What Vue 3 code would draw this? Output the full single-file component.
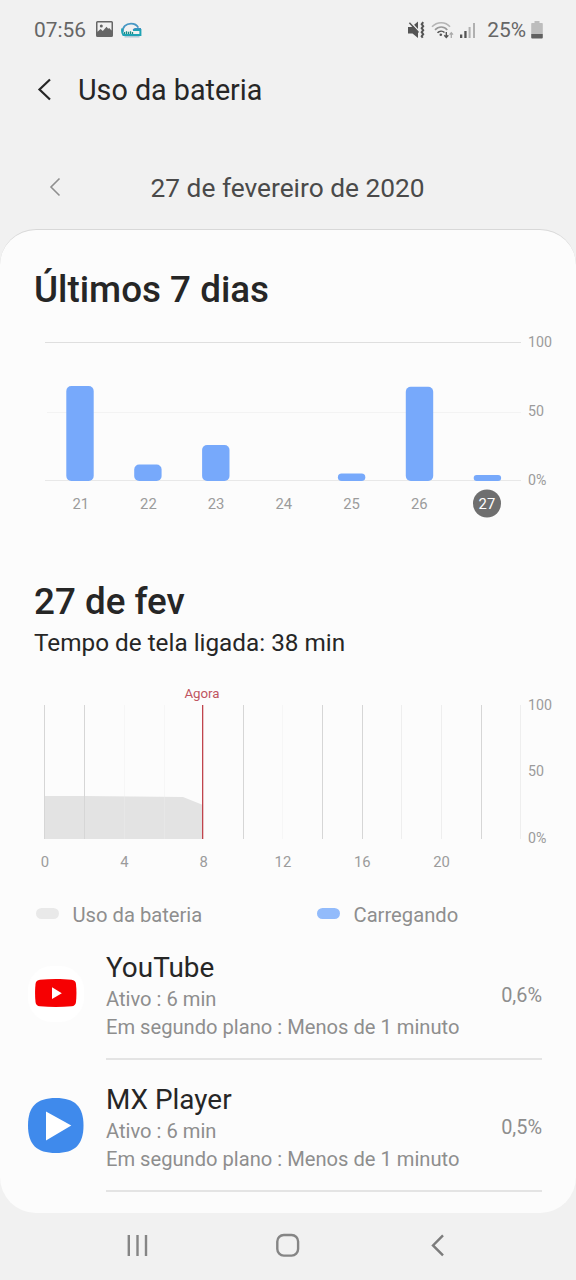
<!-- App.vue -->
<template>
  <div class="screen">
    <!-- STATUS BAR -->
    <div class="status-bar">
      <span class="clock">07:56</span>
      <svg class="icon-image" viewBox="0 0 17 16" width="17" height="16">
        <path
          fill="#666"
          fill-rule="evenodd"
          d="M1.5 0h14A1.500 1.500 0 0 1 17 1.500v13a1.500 1.500 0 0 1-1.500 1.500h-14A1.500 1.500 0 0 1 0 14.500v-13A1.500 1.500 0 0 1 1.500 0zM1.500 1.500v9.300L4.600 8l2.200 2 3.700-4.300 1.700 2.100 1-.8 2.300 2.600V1.500z"
        />
        <circle cx="5.300" cy="5" r="1.500" fill="#666" />
      </svg>
      <svg class="icon-app" viewBox="0 0 21 16" width="21" height="16">
        <path d="M2 10C1.200 5 5 1.600 10 1.600c3.500 0 6 1.500 7.300 4" fill="none" stroke="#4797c4" stroke-width="1.800" />
        <path d="M1.300 6.500C.8 9 1.100 11.300 2.300 12.900H19.400V8H12" fill="none" stroke="#1fa3b4" stroke-width="2" />
        <path d="M12 7.800L14 6.700h6" fill="none" stroke="#3f8fc4" stroke-width="1.300" />
        <path d="M3.500 12V10M5.500 12V9.300M7.500 12V9.800M9.500 12V9.300M11.500 12V10" stroke="#178c86" stroke-width="1.300" />
        <path d="M3.500 14.800h15" stroke="#a9c3d2" stroke-width="1.300" />
      </svg>

      <div class="status-right">
        <svg viewBox="0 0 17 18" width="17" height="18">
          <path d="M0 6h3.500L10 .5V17L4.500 12.500H0z" fill="#555" />
          <path d="M1.600 0L11.500 10.800" stroke="#f1f1f1" stroke-width="1.500" />
          <path d="M1.400 1.800L10.500 11.600" stroke="#555" stroke-width="1.500" />
          <path
            d="M15.200 1.200l-1.500 2 1.500 2-1.500 2 1.500 2-1.500 2 1.500 2-1.500 2 1 1.500"
            fill="none"
            stroke="#555"
            stroke-width="2"
          />
        </svg>
        <svg class="icon-wifi" viewBox="0 0 23 18" width="23" height="18">
          <g fill="none" stroke-width="1.600">
            <path d="M1 5.800C6 .3 14.500.3 19 5.800" stroke="#b4b4b4" />
            <path d="M4 8.900C7.500 5 13 5 16.300 8.900" stroke="#999" />
            <path d="M6.500 11.800c2-2 5-2.200 7-.3" stroke="#555" />
          </g>
          <circle cx="9.800" cy="13.800" r="1.300" fill="#555" />
          <path d="M15.300 11v5M13.300 14.200l2 2.300 2-2.300" fill="none" stroke="#555" stroke-width="1.400" />
          <path d="M20.300 17v-5M18.600 13.700l1.700-2 1.700 2" fill="none" stroke="#aaa" stroke-width="1.300" />
        </svg>
        <svg class="icon-signal" viewBox="0 0 16 17" width="16" height="17">
          <rect x="0" y="12.500" width="2.300" height="3.500" fill="#555" />
          <rect x="4.300" y="9" width="2.300" height="7" fill="#555" />
          <rect x="8.600" y="5" width="2" height="11" fill="#b0b0b0" />
          <rect x="13" y="1" width="2" height="15" fill="#b0b0b0" />
        </svg>
        <span class="battery-level">25%</span>
        <svg class="icon-battery" viewBox="0 0 12 18" width="12" height="18">
          <path d="M3.500 0h5v2H11a.8.8 0 0 1 .8.8V13H.2V2.800A.8.8 0 0 1 1 2h2.500z" fill="#bdbdbd" />
          <path d="M.2 13h11.600v3.500a.9.900 0 0 1-.9.900H1.100a.9.900 0 0 1-.9-.9z" fill="#606060" />
        </svg>
      </div>
    </div>

    <!-- HEADER -->
    <header class="header">
      <svg viewBox="0 0 16 24" width="16" height="24">
        <path d="M13 1.500L2.500 11.500 13 21.500" fill="none" stroke="#262626" stroke-width="2.200" />
      </svg>
      <h1>Uso da bateria</h1>
    </header>

    <div class="date-nav">
      <svg viewBox="0 0 12 20" width="12" height="20">
        <path d="M10.500 1.500L2 10l8.500 8.500" fill="none" stroke="#8f8f8f" stroke-width="1.600" />
      </svg>
      <span class="date">27 de fevereiro de 2020</span>
    </div>

    <main class="card">
      <!-- Section: last 7 days -->
      <h2>Últimos 7 dias</h2>
      <svg class="week-chart" viewBox="0 0 576 200" width="576" height="200">
        <rect x="45" y="17" width="476" height="1" fill="#dfdfdf" />
        <rect x="47" y="87" width="474" height="1" fill="#f3f3f3" />
        <rect x="45" y="155" width="476" height="1" fill="#e8e8e8" />
        <text v-for="l in weekScale" :key="l.text" x="528" :y="l.y" class="scale">{{ l.text }}</text>
        <g v-for="(d, i) in days" :key="d.day">
          <rect
            v-if="d.height"
            :x="66.300 + i * 67.900"
            :y="156 - d.height"
            width="27.400"
            :height="d.height"
            :rx="Math.min(5, d.height / 2)"
            fill="#77a9fb"
          />
          <circle v-if="d.selected" :cx="80.200 + i * 67.800" cy="178.500" r="14" fill="#6f6f6f" />
          <text :x="80.700 + i * 67.700" y="184.300" :class="['tick', { selected: d.selected }]">{{ d.day }}</text>
        </g>
      </svg>

      <!-- Section: selected day -->
      <h2 class="day-title">27 de fev</h2>
      <p class="screen-time">Tempo de tela ligada: 38 min</p>
      <svg class="day-chart" viewBox="0 0 576 210" width="576" height="210">
        <path d="M44 121H85L183 122 203 130V164H44z" fill="#e3e3e3" />
        <rect
          v-for="g in gridLines"
          :key="g.x"
          :x="g.x"
          y="30"
          width="1"
          height="134"
          :fill="g.strong ? '#d6d6d6' : '#eeeeee'"
          :fill-opacity="g.faded ? 0.4 : 1"
        />
        <rect x="202" y="30" width="1.300" height="134" fill="#c0444c" />
        <text x="202" y="23.300" class="now">Agora</text>
        <text v-for="l in dayScale" :key="l.text" x="528" :y="l.y" class="scale">{{ l.text }}</text>
        <text v-for="(h, i) in hours" :key="h" :x="45 + i * 79.300" y="192.300" class="tick">{{ h }}</text>
      </svg>

      <div class="legend">
        <div class="legend-item">
          <span class="swatch usage"></span>
          <span>Uso da bateria</span>
        </div>
        <div class="legend-item">
          <span class="swatch charging"></span>
          <span>Carregando</span>
        </div>
      </div>

      <!-- Section: apps -->
      <div v-for="app in apps" :key="app.name" class="app-row">
        <svg v-if="app.icon === 'youtube'" class="app-icon" viewBox="0 0 56 56" width="56" height="56">
          <rect width="56" height="56" rx="24" fill="#fff" />
          <path
            d="M12 13.700C22 12.700 34 12.700 43.500 13.700c2.700.3 4.200 1.600 4.500 4.300.6 6 .6 12 0 18-.3 2.700-1.800 4-4.500 4.300-10 1-21.500 1-31.500 0-2.700-.3-4.200-1.600-4.500-4.300-.6-6-.6-12 0-18 .3-2.700 1.800-4 4.500-4.300z"
            fill="#f60002"
          />
          <path d="M24 21.300v11.800l9.800-5.900z" fill="#fff" />
        </svg>
        <svg v-else class="app-icon" viewBox="0 0 56 56" width="56" height="56">
          <path
            d="M27.800 0C47 0 55.500 8.500 55.500 27.500S47 55 27.800 55 0 46.500 0 27.500 8.500 0 27.800 0z"
            fill="#3f8aec"
          />
          <path d="M18 13.500v29l25.300-15z" fill="#fff" />
        </svg>
        <div class="app-body">
          <div class="app-info">
            <h3>{{ app.name }}</h3>
            <p>Ativo : {{ app.active }}</p>
            <p>Em segundo plano : {{ app.background }}</p>
          </div>
          <span class="percent">{{ app.percent }}</span>
        </div>
      </div>
    </main>

    <!-- NAVIGATION BAR -->
    <nav class="nav-bar">
      <svg viewBox="0 0 24 24" width="24" height="24">
        <path d="M2.800 2v21M11.500 2v21M20 2v21" stroke="#858585" stroke-width="2.400" />
      </svg>
      <svg viewBox="0 0 24 24" width="24" height="24">
        <rect x="1.300" y="2" width="20.800" height="20.600" rx="6.500" fill="none" stroke="#858585" stroke-width="2.400" />
      </svg>
      <svg viewBox="0 0 24 24" width="24" height="24">
        <path d="M17 2.400L7 12.400l10 10" fill="none" stroke="#7c7c7c" stroke-width="2.400" />
      </svg>
    </nav>
  </div>
</template>

<script setup>
// Bar heights in pixels above the 0% line
const days = [
  { day: 21, height: 95 },
  { day: 22, height: 16.5 },
  { day: 23, height: 36 },
  { day: 24, height: 0 },
  { day: 25, height: 7.5 },
  { day: 26, height: 94.3 },
  { day: 27, height: 6, selected: true }
]

const weekScale = [
  { text: '100', y: 22 },
  { text: '50', y: 91.3 },
  { text: '0%', y: 160 }
]

const dayScale = [
  { text: '100', y: 34.7 },
  { text: '50', y: 101.3 },
  { text: '0%', y: 168 }
]

const hours = [0, 4, 8, 12, 16, 20]

// One vertical line every two hours
const gridLines = [
  { x: 44, strong: true },
  { x: 84, strong: true },
  { x: 124, faded: true },
  { x: 164, faded: true },
  { x: 243, strong: true },
  { x: 282, faded: true },
  { x: 322, strong: true },
  { x: 362, strong: true },
  { x: 401 },
  { x: 441 },
  { x: 481, strong: true },
  { x: 520 }
]

const apps = [
  { name: 'YouTube', icon: 'youtube', active: '6 min', background: 'Menos de 1 minuto', percent: '0,6%' },
  { name: 'MX Player', icon: 'mx', active: '6 min', background: 'Menos de 1 minuto', percent: '0,5%' }
]
</script>

<style>
body {
  background: #f1f1f1;
}
</style>

<style scoped>
.screen {
  width: 576px;
  height: 1280px;
  overflow: hidden;
  background: #f1f1f1;
  color: #262626;
  font-family: Roboto, sans-serif;
}
svg {
  display: block;
  flex: none;
}
h1, h2, h3, p {
  margin: 0;
  font-weight: 400;
}

/* Status bar */
.status-bar {
  display: flex;
  align-items: center;
  height: 60px;
  padding: 0 33px 0 34px;
  box-sizing: border-box;
  color: #666;
  font-size: 20.9px;
}
.clock {
  width: 62px;
}
.icon-image {
  margin-top: -2px;
}
.icon-app {
  margin: -1px 0 0 8px;
}
.status-right {
  display: flex;
  align-items: center;
  margin-left: auto;
}
.icon-wifi {
  margin-left: 6px;
}
.icon-signal {
  margin-left: 6px;
}
.battery-level {
  margin-left: 11px;
  font-size: 20.9px;
}
.icon-battery {
  margin: -1px 0 0 5px;
}

/* Header */
.header {
  display: flex;
  align-items: center;
  gap: 25px;
  height: 60px;
  padding: 0 37px;
}
.header h1 {
  font-size: 28.7px;
}
.date-nav {
  display: flex;
  align-items: center;
  height: 80px;
  margin: 28px 0 1px;
  padding-left: 49px;
}
.date-nav svg {
  margin-top: -2px;
}
.date {
  margin-left: 89.5px;
  color: #4a4a4a;
  font-size: 26.3px;
}

/* Card */
.card {
  height: 984px;
  padding-top: 37px;
  box-sizing: border-box;
  border-top: 1px solid #d8d8d8;
  border-radius: 36px;
  background: #fcfcfc;
}
.card h2 {
  padding-left: 34px;
  font-size: 36.8px;
  font-weight: 500;
  line-height: 46px;
}
.week-chart {
  margin-top: 12px;
}
.card .day-title {
  margin-top: 54px;
}
.screen-time {
  margin-top: 3px;
  padding-left: 34px;
  font-size: 24.3px;
  line-height: 30px;
}
.day-chart {
  margin-top: 17px;
}
.scale {
  fill: #9b9b9b;
  font-size: 14.2px;
}
.tick {
  fill: #9b9b9b;
  font-size: 14.8px;
  text-anchor: middle;
}
.tick.selected {
  fill: #fff;
}
.now {
  fill: #bf5560;
  font-size: 13.3px;
  text-anchor: middle;
}

/* Legend */
.legend {
  display: grid;
  grid-template-columns: 281px 1fr;
  height: 28px;
  margin-top: 15px;
  padding-left: 36px;
  color: #8e8e8e;
  font-size: 20.2px;
  line-height: 30px;
}
.legend-item {
  display: flex;
}
.swatch {
  width: 23px;
  height: 11px;
  margin: 8px 13.5px 0 0;
  border-radius: 6px;
}
.usage {
  background: #e9e9e9;
}
.charging {
  background: #92bbfb;
}

/* App list */
.app-row {
  display: flex;
  height: 132px;
  padding: 0 34px 0 28px;
}
.app-icon {
  margin-top: 38px;
}
.app-body {
  display: flex;
  flex: 1;
  justify-content: space-between;
  margin-left: 22px;
  padding-top: 23px;
  box-sizing: border-box;
  border-bottom: 2px solid #e4e4e4;
}
.app-info h3 {
  font-size: 27.9px;
  line-height: 34px;
}
.app-info p {
  color: #8e8e8e;
  font-size: 20.15px;
  line-height: 28px;
}
.percent {
  margin-top: 31px;
  color: #8e8e8e;
  font-size: 19.9px;
  line-height: 28px;
}

/* Navigation bar */
.nav-bar {
  display: flex;
  align-items: center;
  justify-content: space-between;
  height: 64px;
  padding: 0 126px;
}
</style>
